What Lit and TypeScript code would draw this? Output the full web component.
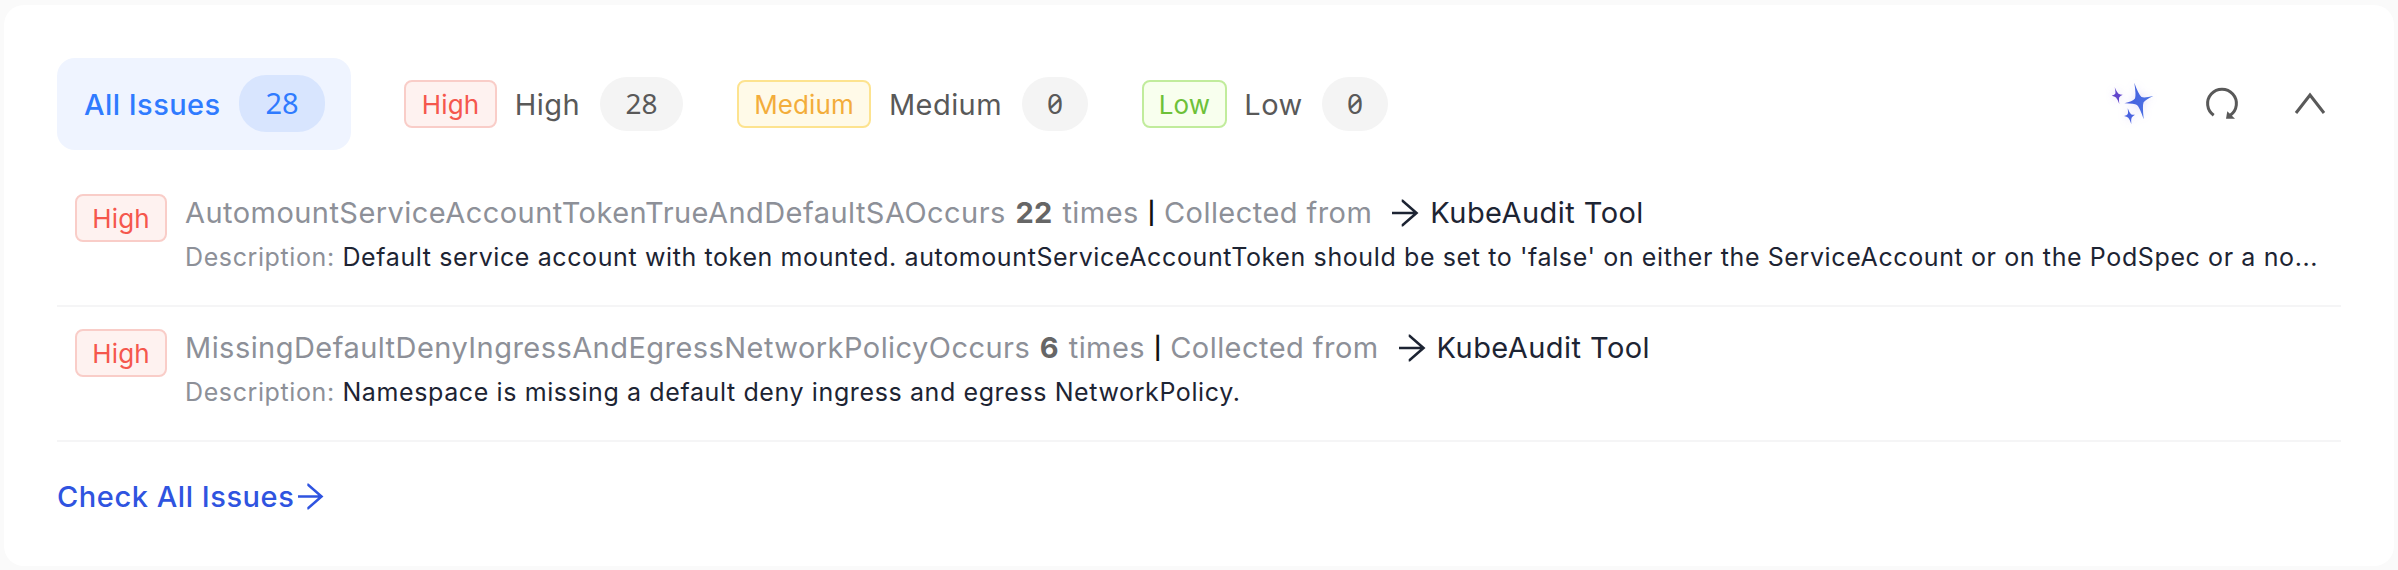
import { LitElement, html, css, svg } from "lit";
import { customElement } from "lit/decorators.js";

const FILTERS = [
  { level: "high", label: "High", count: 28 },
  { level: "medium", label: "Medium", count: 0 },
  { level: "low", label: "Low", count: 0 },
];

const ISSUES = [
  {
    title: "AutomountServiceAccountTokenTrueAndDefaultSA",
    times: 22,
    description:
      "Default service account with token mounted. automountServiceAccountToken should be set to 'false' on either the ServiceAccount or on the PodSpec or a no...",
  },
  {
    title: "MissingDefaultDenyIngressAndEgressNetworkPolicy",
    times: 6,
    description: "Namespace is missing a default deny ingress and egress NetworkPolicy.",
  },
];

const arrow = html`<svg class="arrow" viewBox="0 0 26 26" fill="none" stroke="currentColor" stroke-width="2.6">
  ${svg`<path d="M0 13H24M9.700 0.800H10.500L24.500 13L10.500 25.200H9.700"/>`}
</svg>`;

@customElement("app-root")
export class AppRoot extends LitElement {
  static styles = css`
    :host {
      display: block;
      box-sizing: border-box;
      height: 570px;
      padding: 5px 4px 4px;
      background: #fafafa;
      font-family: Inter, "Liberation Sans", sans-serif;
      font-size: 29px;
      letter-spacing: 0.45px;
      color: #1d2433;
      white-space: nowrap;
    }
    * { box-sizing: border-box; }
    svg { display: block; flex: none; overflow: visible; }
    .card { height: 561px; padding: 53px; background: #fff; border-radius: 20px; }
    .head { display: flex; align-items: center; height: 92px; }
    .tab { display: flex; align-items: center; color: #595959; }
    .all {
      width: 294px; height: 92px; padding: 0 26px 0 27px; margin-right: 53px;
      justify-content: space-between;
      border-radius: 18px; background: #eff4ff; color: #2f7bff; font-weight: 500;
    }
    .all-name { padding-top: 1px; }
    .count {
      display: flex; align-items: center; justify-content: center; flex: none;
      height: 54px; width: 66px; border-radius: 27px; margin-bottom: 1px;
      background: #f4f4f4; font-weight: 400;
      font-family: "Noto Sans", sans-serif; font-size: 28px; line-height: 52px; padding-bottom: 2px; letter-spacing: 0;
      font-feature-settings: "zero", "tnum";
    }
    .high-count { width: 83px; }
    .all .count { height: 57px; width: 86px; background: #d8e5fe; font-size: 29px; line-height: 55px; }
    .tag {
      display: flex; align-items: center; justify-content: center; flex: none;
      height: 48px; border: 2px solid; border-radius: 8px; font-size: 26px; letter-spacing: 0.1px;
      padding-top: 1px;
    }
    .high { width: 93px; color: #f5574d; background: #fef2f0; border-color: #f9cdc8; }
    .medium { width: 134px; color: #f3ad3b; background: #fffae8; border-color: #fde38f; }
    .low { width: 85px; color: #6dc139; background: #f8ffee; border-color: #c1ec9c; }
    .name { text-align: center; padding-top: 1px; }
    .high-name { width: 103px; padding-right: 2px; }
    .medium-name { width: 151px; padding-right: 2px; }
    .low-name { width: 95px; padding-right: 2px; }
    .filters { display: flex; gap: 54px; }
    .tools { display: flex; margin-left: auto; margin-right: 15px; align-items: center; color: #595959; }
    .refresh { margin-left: 49px; }
    .chevron { margin-left: 55px; }
    .spark { filter: drop-shadow(0 0 4px rgba(120, 90, 230, 0.22)); }
    .issue { display: flex; height: 135px; padding: 22px 0 0 18px; border-bottom: 2px solid #f5f5f6; }
    .issue:first-child { height: 157px; padding-top: 44px; }
    .issue .tag { width: 92px; }
    .text { min-width: 0; margin-left: 18px; margin-top: -1px; }
    .title { display: flex; align-items: center; height: 40px; line-height: 40px; white-space: pre; color: #8d9098; }
    .times { font-weight: 700; color: #666; margin: 0 1px; }
    .bar { color: #111; font-size: 22px; font-weight: 600; letter-spacing: 0; line-height: 42px; }
    .source { display: flex; align-items: center; gap: 12px; margin-left: 20px; color: #1d2433; }
    .desc { height: 44px; line-height: 44px; margin-top: 2px; font-size: 25px; letter-spacing: 0.61px; }
    .desc-label { color: #8d9098; }
    .arrow { width: 26px; height: 26px; }
    .more { display: flex; align-items: center; gap: 4px; height: 40px; margin-top: 34px; color: #2f54e0; font-weight: 500; letter-spacing: 0.55px; }
    .more .arrow { width: 25px; height: 25px; }
  `;

  render() {
    return html`<section class="card">
      <header class="head">
        <div class="tab all"><span class="all-name">All Issues</span><span class="count">28</span></div>
        <div class="filters">
          ${FILTERS.map(
            (f) => html`<div class="tab">
              <span class="tag ${f.level}">${f.label}</span><span class="name ${f.level}-name">${f.label}</span><span class="count ${f.level}-count">${f.count}</span>
            </div>`
          )}
        </div>
        <div class="tools">
          <svg class="spark" width="46" height="46" viewBox="0 0 46 46">
            <defs>
              <linearGradient id="spark" x1="0" y1="0" x2="1" y2="0.3">
                <stop offset="0" stop-color="#5a55d6" /><stop offset="0.4" stop-color="#4664e0" /><stop offset="1" stop-color="#4c73e4" />
              </linearGradient>
            </defs>
            <path fill="url(#spark)" d="M24.300 1.700Q28.500 13.500 31.500 16Q34.500 17.200 43.300 15Q35.500 18.500 33.500 21.500Q32.300 25 33.700 38.300Q29.700 26.500 27 24Q24 22.200 14.300 22.300Q22.500 20.500 25 17.500Q26.200 13.500 24.300 1.700Z" />
            <path fill="#6246cc" d="M4.700 6.300Q7 11.500 8.500 12.700Q10 13.700 12.700 13.700Q10 15 9.300 16.300Q8.700 18 9.300 23Q7.500 18 6 16.500Q4.500 15.300 1.700 14.700Q4.800 14 5.400 12.500Q5.700 11 4.700 6.300Z" />
            <path fill="#4a63e0" d="M17.700 27.300Q19.500 32 21 33.200Q22.500 34 25 33.700Q22.500 35.200 21.600 36.700Q20.800 38.500 21.300 43Q19.800 38.500 18.300 36.800Q17 35.500 14 35Q17 34.500 17.800 33Q18.300 31.500 17.700 27.300Z" />
          </svg>
          <svg class="refresh" width="34" height="34" viewBox="0 0 34 34">
            <path fill="none" stroke="currentColor" stroke-width="3" d="M8.700 28.300A14.400 14.400 0 1 1 25.300 28.300" />
            <path fill="currentColor" d="M22.300 24.200L30 31.800H21Z" />
          </svg>
          <svg class="chevron" width="32" height="32" viewBox="0 0 32 32">
            <path fill="none" stroke="currentColor" stroke-width="3" d="M2 25L16 7L30 25" />
          </svg>
        </div>
      </header>
      <div class="list">
        ${ISSUES.map(
          (i) => html`<article class="issue">
            <span class="tag high">High</span>
            <div class="text">
              <div class="title"><span>${i.title}Occurs </span><span class="times">${i.times}</span><span> times </span><span class="bar">|</span><span> Collected from</span><span class="source">${arrow}<span>KubeAudit Tool</span></span></div>
              <div class="desc"><span class="desc-label">Description: </span>${i.description}</div>
            </div>
          </article>`
        )}
      </div>
      <div class="more"><span>Check All Issues</span>${arrow}</div>
    </section>`;
  }
}
